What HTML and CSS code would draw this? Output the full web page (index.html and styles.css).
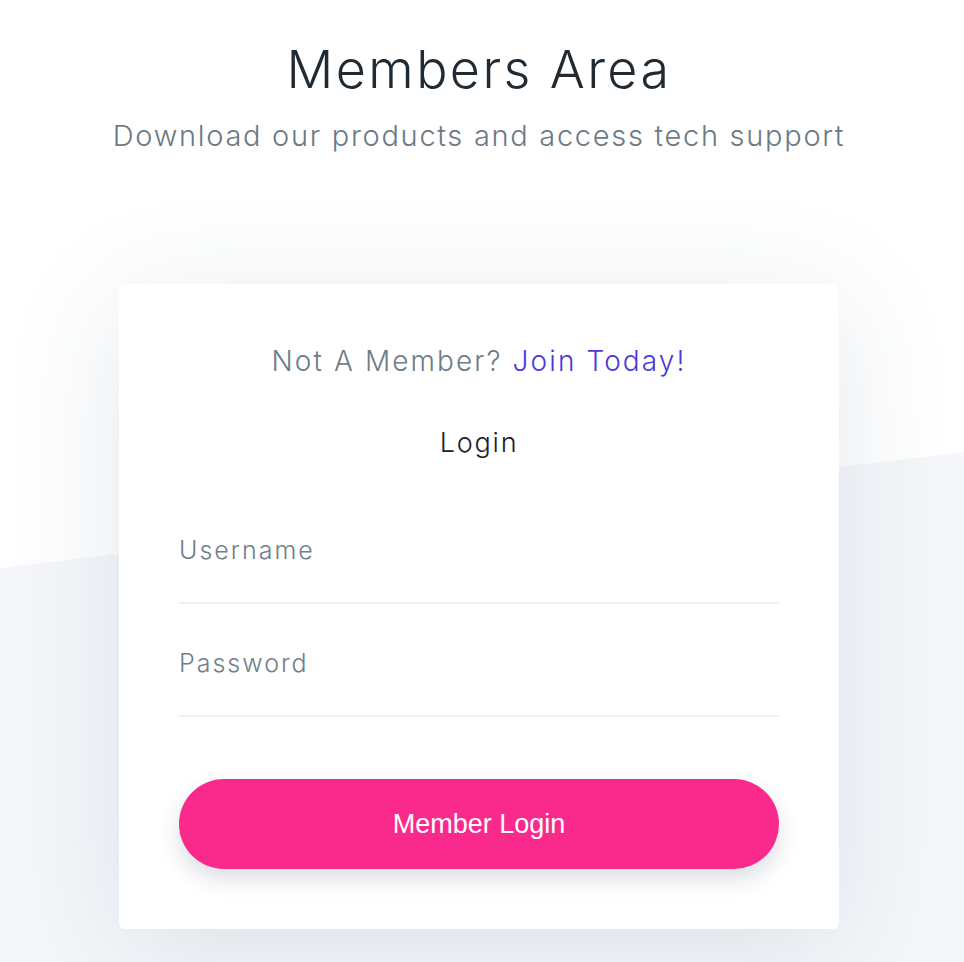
FILE: index.html
```html
<!DOCTYPE html>
<html lang="en">
<head>
<meta charset="utf-8">
<title>Members Area</title>
<link rel="stylesheet" href="styles.css">
</head>
<body>
<div class="bg-slant"></div>
<div class="page">
<header class="hero">
  <h1 class="hero-title">Members Area</h1>
  <p class="hero-sub">Download our products and access tech support</p>
</header>
<main class="card">
  <p class="join">Not A Member? <a class="join-link" href="#">Join Today!</a></p>
  <h2 class="login-title">Login</h2>
  <form class="login-form">
    <input class="field" type="text" placeholder="Username">
    <input class="field field-pass" type="password" placeholder="Password">
    <button class="btn" type="button">Member Login</button>
  </form>
</main>
</div>
</body>
</html>
```

FILE: styles.css
```css
html, body {
  margin: 0;
  padding: 0;
}
body {
  background: #ffffff;
  font-family: "Inter", "Noto Sans", sans-serif;
  font-weight: 300;
  min-height: 962px;
  position: relative;
  overflow: hidden;
}
.bg-slant {
  position: absolute;
  inset: 0;
  background: #f5f7fa;
  clip-path: polygon(0 568px, 100% 452px, 100% 100%, 0 100%);
  z-index: -1;
}
.page {
  padding-right: 6px;
}
.hero {
  text-align: center;
  padding-top: 38px;
}
.hero-title {
  margin: 0;
  font-size: 52px;
  line-height: 64px;
  font-weight: 300;
  letter-spacing: 2.4px;
  color: #1f2a33;
}
.hero-sub {
  margin: 14px 0 0;
  font-size: 29px;
  line-height: 40px;
  letter-spacing: 1.7px;
  color: #6b7a86;
}
.card {
  width: 600px;
  margin: 128px auto 0;
  padding: 57px 60px 60px;
  background: #fff;
  border-radius: 6px;
  box-shadow: 0 20px 120px rgba(38, 62, 100, 0.12);
  text-align: center;
}
.join {
  margin: 0;
  font-size: 28px;
  line-height: 40px;
  letter-spacing: 2.1px;
  color: #6f7c87;
}
.join-link {
  color: #4b3ad8;
  text-decoration: none;
}
.login-title {
  margin: 42px 0 0;
  font-size: 27px;
  line-height: 40px;
  font-weight: 300;
  letter-spacing: 1.8px;
  color: #16212b;
}
.login-form {
  display: flex;
  flex-direction: column;
  margin-top: 67px;
}
.field {
  display: block;
  width: 100%;
  box-sizing: border-box;
  height: 74px;
  padding: 0 0 32px;
  border: 0;
  border-bottom: 2px solid #edf1f5;
  outline: none;
  font-family: inherit;
  font-weight: 300;
  font-size: 25px;
  line-height: 40px;
  letter-spacing: 2px;
  color: #333;
  background: transparent;
}
.field::placeholder {
  color: #707e8b;
  opacity: 1;
}
.field-pass {
  margin-top: 39px;
}
.btn {
  margin-top: 62px;
  height: 90px;
  border: 0;
  border-radius: 45px;
  background: #fa2a8c;
  color: #fff;
  font-family: "Liberation Sans", Arial, sans-serif;
  font-size: 27px;
  box-shadow: 0 10px 22px rgba(30, 50, 80, 0.16);
  cursor: pointer;
}
```
